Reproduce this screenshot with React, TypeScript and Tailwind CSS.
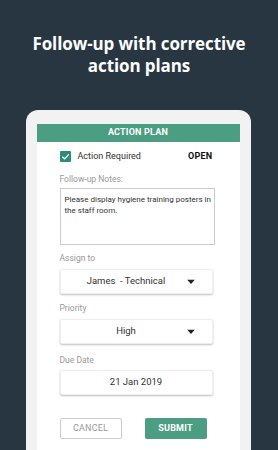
import React from "react";

function Caret() {
  return (
    <svg width="8" height="5" viewBox="0 0 8 5" className="absolute right-[17px] top-1/2 -translate-y-1/2">
      <path d="M0 0 L8 0 L4 4.5 Z" fill="#222" />
    </svg>
  );
}

function Field({ children, caret }: { children: React.ReactNode; caret?: boolean }) {
  return (
    <div className="relative w-[153px] h-[25px] bg-white rounded-[2px] shadow-[0_1px_2px_rgba(0,0,0,0.25)] border border-[#eee] flex items-center justify-center text-[9.5px] text-[#333]">
      <span className={caret ? "-translate-x-[10px]" : ""}>{children}</span>
      {caret && <Caret />}
    </div>
  );
}

export default function App() {
  return (
    <div
      className="w-[278px] h-[450px] bg-[#283642] overflow-hidden flex flex-col items-center"
      style={{ fontFamily: "Roboto, 'Open Sans', sans-serif" }}
    >
      <h1
        className="mt-[33px] text-white text-center font-bold text-[17px] leading-[22px] tracking-[-0.1px]"
        style={{ fontFamily: "'Open Sans', sans-serif" }}
      >
        Follow-up with corrective
        <br />
        action plans
      </h1>
      <div className="mt-[33px] w-[225px] ml-[-2px] h-[400px] bg-[#f2f2f2] rounded-[12px] px-[11px] pt-[14px] shrink-0">
        <div className="bg-white h-full">
          <div className="h-[18px] bg-[#4b9e82] text-white text-[9px] font-bold flex items-center justify-center tracking-[0.2px]">
            ACTION PLAN
          </div>
          <div className="pl-[23px] pr-[25px]">
            <div className="flex items-center mt-[9px] h-[11px]">
              <div className="w-[11px] h-[11px] bg-[#2b8c7a] rounded-[1px] flex items-center justify-center">
                <svg width="9" height="9" viewBox="0 0 10 10">
                  <path d="M1.5 5.2 L4 7.6 L8.6 2.6" stroke="white" strokeWidth="1.5" fill="none" />
                </svg>
              </div>
              <span className="ml-[7px] text-[9px] text-[#333]">Action Required</span>
              <span className="ml-auto mr-[2px] text-[9px] font-bold text-[#111] tracking-[0.3px]">OPEN</span>
            </div>
            <div className="mt-[12px] text-[8.5px] text-[#999] leading-[10px]">Follow-up Notes:</div>
            <div className="mt-[4px] w-[155px] h-[57px] border border-[#ccc] px-[4px] pt-[5px] text-[8px] leading-[11px] text-[#333] whitespace-nowrap">
              Please display hygiene training posters in
              <br />
              the staff room.
            </div>
            <div className="mt-[8px] text-[8.5px] text-[#999] leading-[10px]">Assign to</div>
            <div className="mt-[6px]">
              <Field caret>James&nbsp; - Technical</Field>
            </div>
            <div className="mt-[9px] text-[8.5px] text-[#999] leading-[10px]">Priority</div>
            <div className="mt-[6px]">
              <Field caret>High</Field>
            </div>
            <div className="mt-[11px] text-[8.5px] text-[#999] leading-[10px]">Due Date</div>
            <div className="mt-[5px]">
              <Field>21 Jan 2019</Field>
            </div>
            <div className="mt-[23px] flex gap-[23px]">
              <div className="w-[62px] h-[21px] border border-[#ccc] rounded-[2px] flex items-center justify-center text-[9px] text-[#999] tracking-[0.2px]">
                CANCEL
              </div>
              <div className="w-[62px] h-[21px] bg-[#4b9e82] rounded-[2px] flex items-center justify-center text-[9px] font-bold text-white tracking-[0.2px]">
                SUBMIT
              </div>
            </div>
          </div>
        </div>
      </div>
    </div>
  );
}
